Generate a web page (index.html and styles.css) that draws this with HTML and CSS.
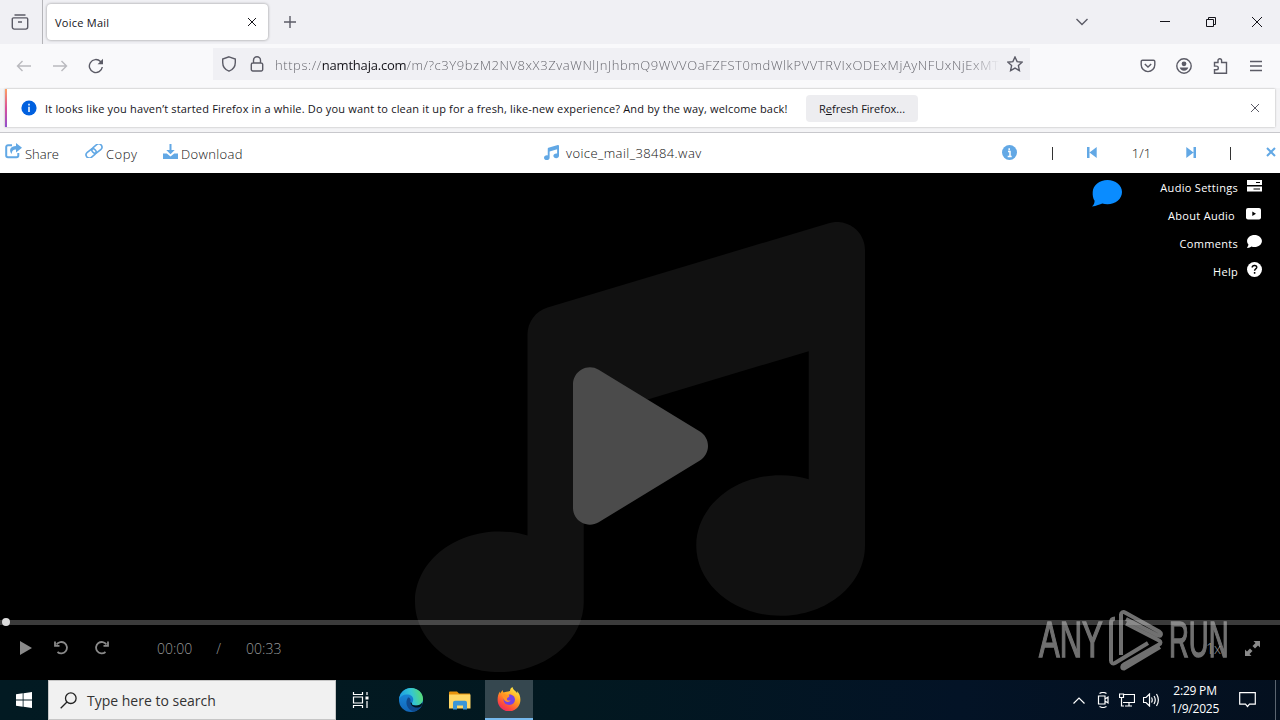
FILE: index.html
```
<!DOCTYPE html>
<html lang="en">
<head>
<meta charset="UTF-8">
<title>Voice Mail</title>
<link rel="stylesheet" href="styles.css">
</head>
<body>

<svg class="defs">
  <symbol id="music" viewBox="0 0 512 512"><path d="M499.1 6.3c8.1 6 12.9 15.6 12.9 25.7V368c0 44.2-43 80-96 80s-96-35.8-96-80s43-80 96-80c11.2 0 22 1.6 32 4.6V147L192 223.8V432c0 44.2-43 80-96 80s-96-35.8-96-80s43-80 96-80c11.2 0 22 1.6 32 4.6V128c0-14.1 9.3-26.6 22.8-30.7l320-96c9.7-2.9 20.2-1.1 28.3 5z"/></symbol>
  <symbol id="play" viewBox="0 0 384 512"><path d="M73 39c-14.8-9.1-33.4-9.4-48.5-.9S0 62.6 0 80V432c0 17.4 9.4 33.4 24.5 41.9s33.7 8.1 48.5-.9L361 297c14.3-8.7 23-24.2 23-41s-8.7-32.2-23-41L73 39z"/></symbol>
  <symbol id="comment" viewBox="0 32 512 448"><path d="M512 240c0 115-115 208-256 208c-37 0-72-6-104-18C120 452 68 480 16 480c-13 0-20-18-11-27c24-25 39-56 42-91C18 327 0 285 0 240C0 125 115 32 256 32s256 93 256 208z"/></symbol>
</svg>

<div class="tabs">
  <div class="tablist">
    <svg width="18" height="16" viewBox="0 0 18 16" class="line"><path d="M3.500 1h11M2.500 3.900h13a1.200 1.200 0 0 1 1.200 1.200v8a2 2 0 0 1-2 2H3.300a2 2 0 0 1-2-2v-8a1.200 1.200 0 0 1 1.200-1.200zM7 8h4"/></svg>
  </div>
  <div class="tab">
    <span>Voice Mail</span>
    <svg width="10" height="10" viewBox="0 0 10 10" class="line dark"><path d="M1 1l8 8M9 1L1 9"/></svg>
  </div>
  <svg class="newtab line" width="12" height="12" viewBox="0 0 12 12"><path d="M6 0v12M0 6h12"/></svg>
  <div class="window">
    <span class="alltabs"><svg width="12" height="8" viewBox="0 0 12 8" class="line"><path d="M.5 1L6 6.500 11.500 1"/></svg></span>
    <span><svg width="10" height="10" viewBox="0 0 10 10" class="line dark"><path d="M0 4.500h10"/></svg></span>
    <span><svg width="10" height="10" viewBox="0 0 10 10" class="line dark"><path d="M.5 2.500h7v7h-7zM2.500 2.500v-2h7v7h-2"/></svg></span>
    <span><svg width="10" height="10" viewBox="0 0 10 10" class="line dark"><path d="M0 0l10 10M10 0L0 10"/></svg></span>
  </div>
</div>

<div class="nav">
  <div class="buttons">
    <span><svg width="16" height="12" viewBox="0 0 16 12" class="line off"><path d="M15 6H1.500M6.500 1l-5 5 5 5"/></svg></span>
    <span><svg width="16" height="12" viewBox="0 0 16 12" class="line off"><path d="M1 6h13.500M9.500 1l5 5-5 5"/></svg></span>
    <span><svg width="16" height="16" viewBox="0 0 16 16" class="line"><path d="M14.300 9A6.500 6.500 0 1 1 12.500 3.500L14 5"/><path d="M15 .8v5.400H9.600z" fill="#5b5b66" stroke="none"/></svg></span>
  </div>
  <div class="url">
    <svg width="16" height="16" viewBox="0 0 16 16" class="line"><path d="M8 .8l6.300 2.300v3.400c0 4-2.300 7.200-6.300 8.700-4-1.500-6.300-4.700-6.300-8.700V3.100z"/></svg>
    <svg width="14" height="16" viewBox="0 0 14 16" class="line lock"><path d="M2.800 7h8.400a1.500 1.500 0 0 1 1.500 1.500v5a1.500 1.500 0 0 1-1.500 1.500H2.800a1.500 1.500 0 0 1-1.500-1.500v-5A1.500 1.500 0 0 1 2.800 7zM3.500 7V4.200a3.500 3.500 0 0 1 7 0V7"/></svg>
    <div class="address">https://<b>namthaja.com</b>/m/?c3Y9bzM2NV8xX3ZvaWNlJnJhbmQ9WVVOaFZFST0mdWlkPVVTRVIxODExMjAyNFUxNjExMTc</div>
    <svg width="16" height="16" viewBox="0 0 16 16" class="line"><path d="M8 1l2.100 4.600 5 .6-3.700 3.400 1 5L8 12.100l-4.400 2.500 1-5L.9 6.200l5-.6z"/></svg>
  </div>
  <div class="buttons right">
    <span><svg width="16" height="14" viewBox="0 0 16 14" class="line"><path d="M2.500 1.200h11a1.300 1.300 0 0 1 1.300 1.300v3.300a6.800 6.800 0 0 1-13.600 0V2.500a1.300 1.300 0 0 1 1.300-1.300zM4.800 5L8 8l3.200-3"/></svg></span>
    <span><svg width="16" height="16" viewBox="0 0 16 16" class="line"><circle cx="8" cy="8" r="7.200"/><circle cx="8" cy="5.800" r="2.400" fill="#5b5b66" stroke="none"/><path d="M3.700 9.500h8.600c-.5 2-2 3.200-4.300 3.200S4.200 11.500 3.700 9.500z" fill="#5b5b66" stroke="none"/></svg></span>
    <span><svg width="16" height="18" viewBox="0 0 16 18" class="line"><path d="M2.500 5.500H6V3.500a1.800 1.800 0 0 1 3.600 0v2h4.900v10.800H2.500v-3.600h2a1.800 1.800 0 0 0 0-3.600h-2z"/></svg></span>
    <span><svg width="12" height="12" viewBox="0 0 12 12" class="line"><path d="M0 1.500h12M0 6h12M0 10.500h12"/></svg></span>
  </div>
</div>

<div class="notice">
  <div class="card">
    <svg width="16" height="16" viewBox="0 0 16 16"><circle cx="8" cy="8" r="7.600" fill="#0060df"/><path d="M8 3.800v1.600M8 6.800v5.200" stroke="#fff" stroke-width="1.500"/></svg>
    <p>It looks like you haven’t started Firefox in a while. Do you want to clean it up for a fresh, like-new experience? And by the way, welcome back!</p>
    <button>R<u>e</u>fresh Firefox...</button>
    <svg class="dismiss line" width="8" height="8" viewBox="0 0 8 8"><path d="M0 0l8 8M8 0L0 8"/></svg>
  </div>
</div>

<div class="toolbar">
  <div class="actions">
    <a class="share"><svg width="17" height="16" viewBox="0 0 17 16"><path d="M7 2.200H3A1.800 1.800 0 0 0 1.200 4v8.500A1.800 1.800 0 0 0 3 14.300h8.500a1.800 1.800 0 0 0 1.800-1.800V10" fill="none" stroke="#62a8e5" stroke-width="2"/><path d="M11 0l6 4.800L11 9.500V6.600C8.500 6.500 7 7.500 6.600 11 3.500 7 5.500 3 11 3z"/></svg>Share</a>
    <a class="copy"><svg class="link" width="18" height="14" viewBox="0 0 18 14"><g transform="rotate(-40 9 7)"><rect x="-.3" y="3.800" width="11" height="6.400" rx="3.200"/><rect x="7.300" y="3.800" width="11" height="6.400" rx="3.200"/></g></svg>Copy</a>
    <a class="download"><svg width="15" height="15" viewBox="0 0 15 15"><path d="M6.500 0h2v6h3.200L7.500 10.200 3.300 6h3.200zM0 9.500h3.800l3.700 3 3.700-3H15V15H0z"/></svg>Download</a>
  </div>
  <div class="file">
    <svg width="15" height="15"><use href="#music"/></svg>
    <span>voice_mail_38484.wav</span>
  </div>
  <div class="pager">
    <svg width="15" height="15" viewBox="0 0 15 15"><circle cx="7.500" cy="7.500" r="7.500"/><path d="M6 6.500h2v5M5.700 11.500h4M7.200 3.200v2" stroke="#fff" stroke-width="1.500" fill="none"/></svg>
    <i></i>
    <svg width="10" height="11" viewBox="0 0 10 11"><path d="M0 0h2.500v11H0zM9.700 0v11L2.500 5.500z"/></svg>
    <span>1/1</span>
    <svg width="10" height="11" viewBox="0 0 10 11"><path d="M7.500 0H10v11H7.500zM.3 0v11l7.200-5.500z"/></svg>
    <i></i>
    <svg class="close" width="10" height="10" viewBox="0 0 10 10"><path d="M1 1l8 8M9 1L1 9" stroke="#62a8e5" stroke-width="2"/></svg>
  </div>
</div>

<div class="player">
  <svg class="cover" width="450" height="450"><use href="#music"/></svg>
  <svg class="bigplay" width="135" height="180"><use href="#play"/></svg>
  <svg class="bubble" width="30" height="27" viewBox="0 0 30 27"><path d="M15.500 0C23.500 0 30 5 30 12s-6.500 12.300-14.500 12.300c-2 0-3.700-.3-5.200-.8C8 24.300 4.500 26 0 26.500c1.800-1.500 2.600-3.600 2.600-5.800C1 18.500.5 15.500.7 12 1 5 7.500 0 15.500 0z"/></svg>
  <ul class="menu">
    <li>Audio Settings <svg width="15" height="12" viewBox="0 0 15 12"><path d="M0 0h15v5H0zM0 6.500h15v5H0z"/><path d="M9 2.500h4M6.500 9h6.500" stroke="#000"/></svg></li>
    <li class="about">About Audio <svg width="15" height="12" viewBox="0 0 15 12"><rect width="15" height="11.500" rx="2"/><path d="M6.300 3.500v4.500L10 5.700z" fill="#000"/></svg></li>
    <li>Comments <svg width="15" height="13"><use href="#comment"/></svg></li>
    <li>Help <svg width="15" height="15" viewBox="0 0 15 15"><circle cx="7.500" cy="7.500" r="7.500"/><path d="M5.200 5.500c.2-3 5-2.700 4.500.2-.3 1.300-2.100 1.200-2.100 3M7.600 10v1.800" fill="none" stroke="#000" stroke-width="1.500"/></svg></li>
  </ul>
  <div class="controls">
    <div class="progress"></div>
    <div class="row">
      <svg class="p" width="12" height="14" viewBox="0 0 12 14"><path d="M0 0l12 7-12 7z"/></svg>
      <svg class="l" width="15" height="14" viewBox="0 0 15 14"><path d="M2.500 3.500A5.700 5.700 0 1 1 3.500 11M1 .5v4.300h4.500" class="arc"/></svg>
      <svg class="r" width="15" height="14" viewBox="0 0 15 14"><path d="M12.500 3.500A5.700 5.700 0 1 0 11.500 11M14 .5v4.300H9.500" class="arc"/></svg>
      <span class="now">00:00</span><span class="sep">/</span><span>00:33</span>
      <span class="speed">1x</span>
      <svg class="full" width="15" height="15" viewBox="0 0 15 15"><path d="M8.500 0H15v6.500l-2-2-3 3L7.500 5l3-3zM0 8.500l2 2 3-3L7.500 10l-3 3 2 2H0z"/></svg>
    </div>
  </div>
  <div class="watermark">
    <span class="any">ANY</span>
    <svg width="54" height="62" viewBox="0 0 54 62"><path d="M12 46V5.500a2.500 2.500 0 0 1 4-2L50 22.500c3.500 2.500 1.500 5-1 4L17 10M6 9.500c-3 0-4 1.500-4 4v38c0 3 2 3.500 4 2.500l33-20M17 14.500l33 17c2 1.300 2 3 0 4L15 55.500c-2.500 1.500-2 4 0 4L51 38"/></svg>
    <span class="run">RUN</span>
  </div>
</div>

<div class="taskbar">
  <div class="start"><svg width="16" height="16" viewBox="0 0 16 16" fill="#fff"><path d="M0 2.300L6.700 1.300v6.300H0zM7.500 1.200L16 0v7.600H7.500zM0 8.400h6.700v6.300L0 13.700zM7.500 8.400H16V16l-8.500-1.200z"/></svg></div>
  <div class="search">
    <svg width="17" height="17" viewBox="0 0 17 17" fill="none" stroke="#222" stroke-width="1.300"><circle cx="10.800" cy="6.200" r="5.300"/><path d="M7 10L.7 16.300"/></svg>
    <span>Type here to search</span>
  </div>
  <div class="app view"><svg width="17" height="16" viewBox="0 0 17 16" fill="none" stroke="#fff" stroke-width="1.200"><path d="M1.500 0v2.500h9V0M1.500 16v-2.500h9V16M1.500 5h9v6h-9zM15 0v3M15 9v7"/><path d="M13.500 4.500h3v3h-3z" fill="#fff" stroke="none"/></svg></div>
  <div class="app edge">
    <svg width="24" height="24" viewBox="0 0 24 24">
      <defs>
        <linearGradient id="e1" x1="0" x2="1" y1=".3" y2=".1"><stop offset="0" stop-color="#1b9de2"/><stop offset=".5" stop-color="#34c6d4"/><stop offset="1" stop-color="#5fe061"/></linearGradient>
        <linearGradient id="e2" x1="0" x2="0" y1="0" y2="1"><stop offset="0" stop-color="#1a8fe0"/><stop offset="1" stop-color="#1266b8"/></linearGradient>
      </defs>
      <circle cx="12" cy="12" r="12" fill="url(#e2)"/>
      <path d="M0 11C1 4.500 6 0 12.200 0 19 0 24 5 24 11c0 4-3 6.500-7 6.500-3.500 0-4.800-1.300-4-2.500 3-4 .5-8-4-8.500C5 6 1.500 8 0 11z" fill="url(#e1)"/>
      <path d="M9 9.500c-3.500 5-1 12.500 6 14.100 3.500-.8 6.200-2.800 7.800-5.600-5 2.500-12.500 0-11.300-5.500C11.800 11 10.500 9 9 9.500z" fill="#104a8e"/>
      <path d="M13 15c-.8 1.200.5 2.500 4 2.500 2.800 0 5-1.100 6.200-3-.1 1.500-.3 2.500-.8 3.800-4 2.700-10.500 1.200-11-4z" fill="#02151d"/>
    </svg>
  </div>
  <div class="app files">
    <svg width="22" height="19" viewBox="0 0 22 19"><path d="M0 1.500Q0 .5 1 .5h7l2 2h11v5H0z" fill="#e8930c"/><path d="M0 3.500h21.500v14H0z" fill="#ffd766"/><path d="M4 18.500v-6.700a2 2 0 0 1 2-2h10a2 2 0 0 1 2 2v6.700h-4v-4H8v4z" fill="#3a96d8"/></svg>
  </div>
  <div class="app firefox">
    <svg width="24" height="24" viewBox="0 0 24 24">
      <defs><linearGradient id="f1" x1=".8" x2=".2" y1="0" y2="1"><stop offset="0" stop-color="#fff04a"/><stop offset=".45" stop-color="#ff9a1f"/><stop offset=".75" stop-color="#ff4d3c"/><stop offset="1" stop-color="#e8206e"/></linearGradient></defs>
      <path d="M13 4c0-1.800 1-3.200 2.500-4 .5 3 3.500 4 4.700 6.200 0-.8 0-1.400-.4-2.200 2.500 2.300 3.700 5.500 3.600 9A11.400 11.400 0 0 1 .6 13C.6 9.500 1.300 6.500 3 4.500l.3 2c.5-1.300 1.300-2.500 2.500-3.500-.1 1.200.2 2 .8 2.500C8.500 4.800 10.500 5 13 4z" fill="url(#f1)"/>
      <path d="M7.300 10.500c1-.8 2.500-.8 4-1 1-.1 1-1.300.2-2 4-.6 6.600 2 6.500 5.300a5.800 5.800 0 0 1-11.500.3c0-1 .2-1.900.8-2.600z" fill="#7542e5"/>
      <path d="M4.500 7.500c2-.8 4-.2 5 .7l3 .6c0 1.500-2 1.600-2.500 2.600-.5 1.600 1.500 2.800 3.500 1.800-.7 2.500-5.500 2.300-6.500-.7z" fill="#ff9226"/>
    </svg>
  </div>
  <div class="tray">
    <span><svg width="12" height="7" viewBox="0 0 12 7"><path d="M.5 6.500L6 1l5.500 5.500"/></svg></span>
    <span><svg width="12" height="16" viewBox="0 0 12 16"><path d="M1.500 4h6.500v8H1.500zM8 7l3-2v6L8 9M2.500 1.500q3.500-2 7 0M2.500 14.500q3.500 2 7 0"/></svg></span>
    <span><svg width="16" height="14" viewBox="0 0 16 14"><path d="M5 1.500h10.500v8H4M10 9.500v3.500M6 13h7M.5 1h4v3.500h-4zM2.500 4.500V13H5"/></svg></span>
    <span><svg width="17" height="14" viewBox="0 0 17 14"><path d="M.5 4.500H3L6.500 1v12L3 9.500H.5zM8.500 4.500q1.500 2.500 0 5M11 3q2.500 4 0 8M13.500 1q3.700 6 0 12"/></svg></span>
    <div class="clock">2:29 PM<br>1/9/2025</div>
    <svg class="action" width="17" height="16" viewBox="0 0 17 16"><path d="M.7.700h15.600v11.500H10.500L8.500 14.500 6.500 12.200H.7z"/></svg>
    <div class="desktop"></div>
  </div>
</div>

</body>
</html>
```
FILE: styles.css
```
* {box-sizing: border-box;}
body {
  margin: 0;
  width: 1280px;
  height: 720px;
  overflow: hidden;
  background: #000;
  font-family: "Open Sans", "Noto Sans", sans-serif;
  font-size: 12px;
  color: #15141a;
}
svg {display: block; flex: none;}
.defs {width: 0; height: 0; position: absolute;}
.line {fill: none; stroke: #5b5b66; stroke-width: 1.4;}
.dark {stroke: #15141a; stroke-width: 1;}
.off {stroke: #b9b9be;}

/* tab strip */
.tabs {display: flex; align-items: center; height: 44px; background: #f0f0f4;}
.tablist {width: 43px; height: 44px; padding: 14px 0 0 11px; border-right: 1px solid #b4b4b8;}
.tab {
  display: flex;
  align-items: center;
  justify-content: space-between;
  width: 221px;
  height: 36px;
  margin-left: 4px;
  padding: 0 11px 0 8px;
  background: #fff;
  border-radius: 4px;
  box-shadow: 0 0 3px rgba(0,0,0,.4);
  font-size: 11px;
  letter-spacing: .25px;
}
.newtab {margin-left: 16px;}
.window {display: flex; margin-left: auto;}
.window span {display: flex; align-items: center; justify-content: center; width: 46px; height: 44px;}
.window .alltabs {width: 36px; margin-right: 42px;}

/* address bar */
.nav {display: flex; align-items: center; height: 44px; padding: 0 6px; background: #f9f9fb;}
.buttons {display: flex; height: 42px;}
.buttons span {display: flex; align-items: center; justify-content: center; width: 36px;}
.buttons:first-child {height: 40px;}
.buttons.right {height: 40px; margin-left: auto;}
.url {
  display: flex;
  align-items: center;
  width: 817px;
  height: 32px;
  margin: -4px 0 0 99px;
  padding: 0 7px 0 8px;
  background: #f0f0f4;
}
.lock {margin-left: 13px;}
.address {
  width: 726px;
  margin: 2px 7px 0 11px;
  overflow: hidden;
  white-space: nowrap;
  font-size: 13px;
  font-weight: 300;
  letter-spacing: .58px;
  color: #68686f;
  -webkit-mask-image: linear-gradient(to left, transparent, #000 30px);
  mask-image: linear-gradient(to left, transparent, #000 30px);
}
.address b {font-weight: 400; letter-spacing: -.2px; color: #15141a;}

/* notification */
.notice {height: 45px; padding: 1px 5px 0; background: #f4f4f6; border-bottom: 1px solid #c8c8cc;}
.card {
  display: flex;
  align-items: center;
  height: 38px;
  padding: 0 16px 0 14px;
  background: #fff;
  border-left: 2px solid;
  border-image: linear-gradient(#ffa45e, #d94f9b 50%, #8d4fd0) 1;
  box-shadow: 0 0 2px rgba(0,0,0,.3);
}
.card p {width: 742px; margin: 1px 19px 0 8px; white-space: nowrap; font-size: 11px; letter-spacing: .175px;}
.card button {
  width: 112px;
  height: 27px;
  padding: 0;
  border: 0;
  border-radius: 4px;
  background: #ededf0;
  font: 11px "Open Sans", sans-serif;
  color: #15141a;
}
.dismiss {margin-left: auto; stroke-width: 1;}

/* file toolbar */
.toolbar {
  display: grid;
  grid-template-columns: 544px 1fr 278px;
  align-items: center;
  height: 40px;
  background: #fff;
  font-size: 13px;
  font-weight: 300;
  color: #111;
}
.toolbar svg {fill: #62a8e5;}
.actions, .file, .pager {display: flex; align-items: center;}
.actions {padding-top: 1px;}
.actions a {display: flex; align-items: center; gap: 3px;}
.actions svg {margin-bottom: 5px;}
.toolbar .link {fill: none; stroke: #62a8e5; stroke-width: 1.6;}
.share {width: 80px; margin-left: 5px;}
.copy {width: 78px; letter-spacing: .5px;}
.download {letter-spacing: .35px;}
.file {gap: 7px; letter-spacing: .42px;}
.file svg {margin-bottom: 2px;}
.pager {justify-content: space-between; padding-right: 4px;}
.pager svg {margin-bottom: 2px;}
.pager i {width: 1px; height: 13px; background: #333;}

/* player */
.player {position: relative; height: 507px; background: #000;}
.cover {position: absolute; left: 415px; top: 49px; fill: #111;}
.bigplay {position: absolute; left: 573px; top: 183px; fill: #4b4b4b;}
.bubble {position: absolute; left: 1092px; top: 7px; fill: #0a8cff;}
.menu {
  position: absolute;
  right: 18px;
  top: 0;
  margin: 0;
  padding: 0;
  list-style: none;
  font-size: 11px;
  letter-spacing: .3px;
  color: #fff;
}
.menu li {display: flex; align-items: center; justify-content: flex-end; height: 28px; gap: 9px;}
.menu svg {fill: #fff; margin-bottom: 3px;}
.menu .about {padding-right: 1px; gap: 11px;}
.controls {position: absolute; left: 0; right: 0; bottom: 0; height: 60px;}
.progress {height: 5px; background: rgba(255,255,255,.23);}
.progress:before {
  content: "";
  display: block;
  position: relative;
  left: 2px;
  top: -2px;
  width: 8px;
  height: 8px;
  border-radius: 50%;
  background: #dcdcdc;
}
.row {
  display: flex;
  align-items: center;
  height: 46px;
  padding: 0 20px;
  font-size: 14px;
  font-weight: 300;
  color: #999;
}
.row svg {fill: #8a8a8a;}
.row .arc {fill: none; stroke: #8a8a8a; stroke-width: 1.8;}
.l {margin-left: 22px;}
.r {margin-left: 25px;}
.now {margin-left: 48px;}
.sep {margin: 0 25px 0 24px;}
.speed {margin-left: auto; margin-right: 24px; color: #999;}
.watermark {
  position: absolute;
  left: 1039px;
  top: 436px;
  display: flex;
  align-items: center;
  height: 62px;
  opacity: .55;
}
.watermark span {
  width: 64px;
  font: 50px/62px "Liberation Sans Narrow", "Liberation Sans", sans-serif;
  color: #ccc;
  -webkit-text-stroke: 1.5px #ccc;
  transform-origin: left;
}
.watermark svg {margin: 0 6px; fill: none; stroke: #ccc; stroke-width: 4;}
.any {transform: scaleX(.62);}
.run {transform: scaleX(.55);}

/* taskbar */
.taskbar {display: flex; height: 40px; background: linear-gradient(90deg, #021a22, #021820 45%, #031326 75%, #04101f); color: #fff;}
.taskbar > div {display: flex; align-items: center;}
.start {width: 48px; justify-content: center;}
.search {
  width: 288px;
  padding-left: 11px;
  gap: 10px;
  background: #f1f1f1;
  border: 1px solid #c6c6c6;
  font-size: 14px;
  color: #333;
}
.app {width: 49px; justify-content: center;}
.view {width: 50px; padding-right: 2px;}
.files {width: 50px; padding-right: 1px;}
.taskbar .firefox {width: 48px; background: #35474f; border-bottom: 2px solid #76b9ed;}
.tray {margin-left: auto;}
.tray span {display: flex; align-items: center; justify-content: center; width: 24px;}
.tray svg {fill: none; stroke: #fff; stroke-width: 1.2;}
.clock {width: 64px; text-align: center; font-size: 12px; line-height: 18px; letter-spacing: -.2px;}
.action {margin-left: 12px;}
.desktop {width: 5px; height: 40px; margin-left: 19px; border-left: 1px solid #5b6570;}
```
